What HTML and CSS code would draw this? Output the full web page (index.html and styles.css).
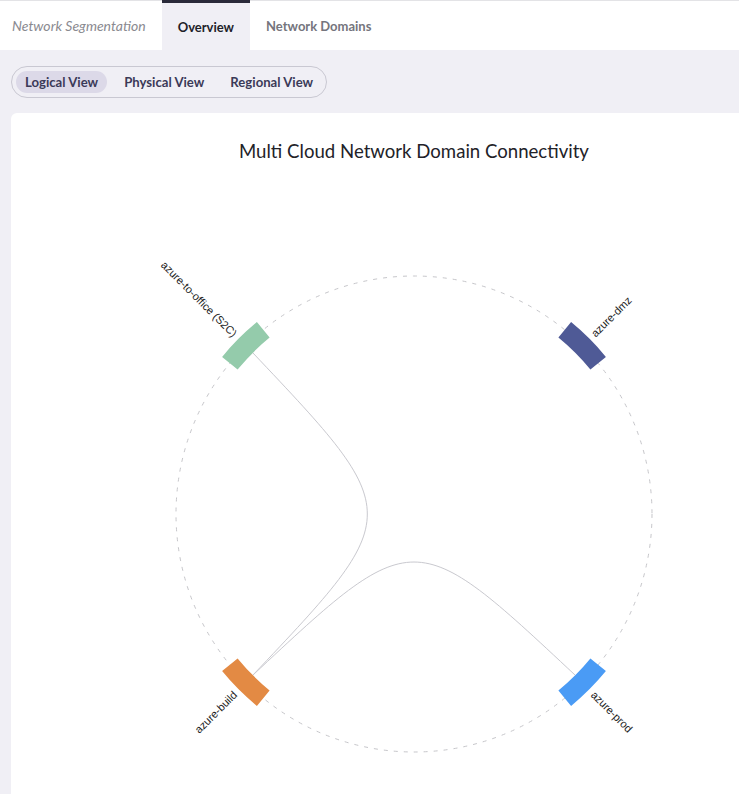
FILE: index.html
```html
<!DOCTYPE html>
<html>
<head>
<meta charset="utf-8">
<link rel="stylesheet" href="styles.css">
</head>
<body>
<nav class="tabs">
  <div class="tab tab-crumb">Network Segmentation</div>
  <div class="tab tab-active">Overview</div>
  <div class="tab tab-plain">Network Domains</div>
</nav>
<main class="content">
  <div class="segments">
    <div class="seg seg-on">Logical View</div>
    <div class="seg">Physical View</div>
    <div class="seg">Regional View</div>
  </div>
  <section class="card">
    <div class="card-inner">
      <h2 class="chart-title">Multi Cloud Network Domain Connectivity</h2>
      <svg class="chord" width="806" height="640" viewBox="-403 -352 806 640">
        <circle class="ring" cx="0" cy="0" r="238"></circle>
        <path class="link" d="M-161.2,-161.2 C-8.5,0 -8.5,0 -161.2,161.2"></path>
        <path class="link" d="M-161.2,161.2 C0,10.3 0,10.3 161.2,161.2"></path>
        <path class="arc arc-office" d="M-191.9,-157.1 A248,248 0 0 1 -157.1,-191.9 L-144.4,-176.4 A228,228 0 0 0 -176.4,-144.4 Z"></path>
        <path class="arc arc-dmz" d="M157.1,-191.9 A248,248 0 0 1 191.9,-157.1 L176.4,-144.4 A228,228 0 0 0 144.4,-176.4 Z"></path>
        <path class="arc arc-prod" d="M191.9,157.1 A248,248 0 0 1 157.1,191.9 L144.4,176.4 A228,228 0 0 0 176.4,144.4 Z"></path>
        <path class="arc arc-build" d="M-157.1,191.9 A248,248 0 0 1 -191.9,157.1 L-176.4,144.4 A228,228 0 0 0 -144.4,176.4 Z"></path>
        <text class="lbl" text-anchor="end" dy="0.35em" transform="rotate(225) translate(253,0) rotate(180)">azure-to-office (S2C)</text>
        <text class="lbl" text-anchor="start" dy="0.35em" transform="rotate(-45) translate(253,0)">azure-dmz</text>
        <text class="lbl" text-anchor="start" dy="0.35em" transform="rotate(45) translate(253,0)">azure-prod</text>
        <text class="lbl" text-anchor="end" dy="0.35em" transform="rotate(135) translate(253,0) rotate(180)">azure-build</text>
      </svg>
    </div>
  </section>
</main>
</body>
</html>
```
FILE: styles.css
```css
html, body {
  margin: 0;
  padding: 0;
  overflow: hidden;
}
body {
  background: #f0eff5;
  font-family: Lato, "Open Sans", sans-serif;
  width: 739px;
  height: 794px;
}
.tabs {
  display: flex;
  height: 49px;
  background: #ffffff;
  border-top: 1px solid #e3e3e6;
}
.tab {
  display: flex;
  align-items: center;
  padding: 0 16px;
  font-size: 13px;
  box-sizing: border-box;
  height: 49px;
}
.tab-crumb {
  padding-left: 12px;
  font-size: 14px;
  font-style: italic;
  color: #8a8a90;
}
.tab-active {
  background: #f0eff5;
  border-top: 3px solid #2a2a3a;
  margin-top: -1px;
  height: 50px;
  font-weight: 700;
  color: #1f1f2a;
}
.tab-plain {
  font-weight: 700;
  color: #75757d;
}
.content {
  padding: 16px 0 0 11px;
}
.segments {
  display: inline-flex;
  gap: 8px;
  padding: 4px;
  border: 1px solid #c9c8d2;
  border-radius: 16px;
}
.seg {
  height: 22px;
  line-height: 22px;
  padding: 0 9px;
  border-radius: 11px;
  font-size: 13.15px;
  font-weight: 700;
  color: #3b3a58;
}
.seg-on {
  background: #dcd9e8;
}
.card {
  margin-top: 15px;
  background: #ffffff;
  border-radius: 6px 0 0 0;
  height: 700px;
  overflow: hidden;
}
.card-inner {
  width: 806px;
}
.chart-title {
  margin: 0;
  padding-top: 27px;
  line-height: 22px;
  font-size: 18.6px;
  font-weight: 400;
  color: #222228;
  text-align: center;
}
.chord {
  display: block;
}
.ring {
  fill: none;
  stroke: #c6c6ca;
  stroke-width: 1;
  stroke-dasharray: 4 6;
}
.link {
  fill: none;
  stroke: #c9c9cf;
  stroke-width: 1;
}
.arc-office { fill: #94cbab; }
.arc-dmz { fill: #4f5a96; }
.arc-prod { fill: #4a9bf5; }
.arc-build { fill: #e38a44; }
.lbl {
  font-family: "Liberation Sans", Arial, sans-serif;
  font-size: 11px;
  fill: #1c1c1c;
}
```
